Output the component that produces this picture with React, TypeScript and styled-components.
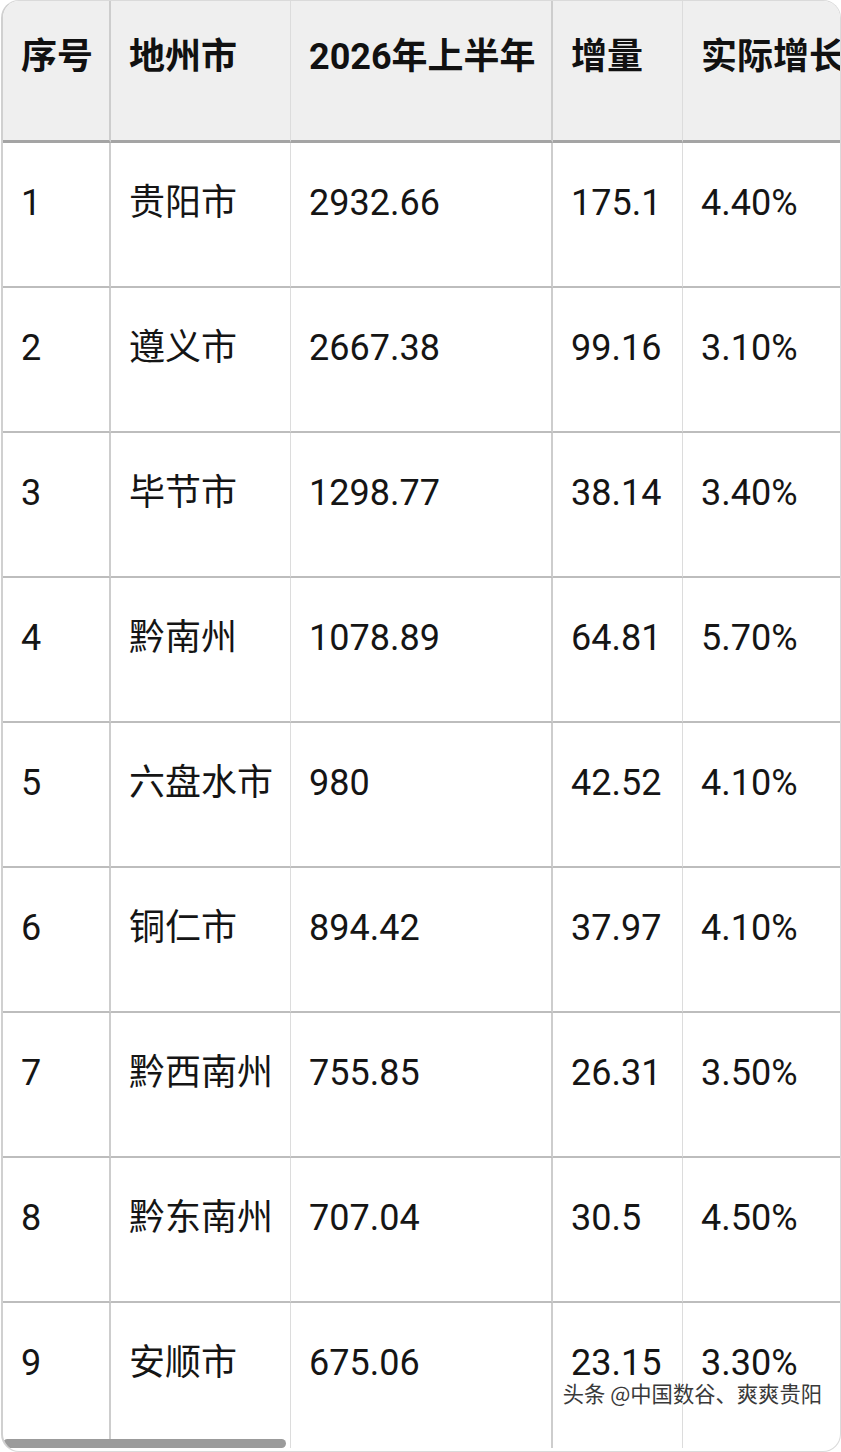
import React from 'react';
import styled, { createGlobalStyle } from 'styled-components';

const GlobalStyle = createGlobalStyle`
    html, body {
        margin: 0;
        padding: 0;
        background: #ffffff;
    }
    body {
        font-family: Roboto, "Noto Sans CJK SC", "Noto Sans", sans-serif;
        color: #111;
    }
`;

type Row = [string, string, string, string, string];

const rows: Row[] = [
    ['1', '贵阳市', '2932.66', '175.1', '4.40%'],
    ['2', '遵义市', '2667.38', '99.16', '3.10%'],
    ['3', '毕节市', '1298.77', '38.14', '3.40%'],
    ['4', '黔南州', '1078.89', '64.81', '5.70%'],
    ['5', '六盘水市', '980', '42.52', '4.10%'],
    ['6', '铜仁市', '894.42', '37.97', '4.10%'],
    ['7', '黔西南州', '755.85', '26.31', '3.50%'],
    ['8', '黔东南州', '707.04', '30.5', '4.50%'],
    ['9', '安顺市', '675.06', '23.15', '3.30%'],
];

const headers = ['序号', '地州市', '2026年上半年', '增量', '实际增长率'];
// widths incl. right border; every other column has the heavier rule
const widths = [108, 180, 262, 130, 280];

const Wrap = styled.div`
    position: relative;
    box-sizing: border-box;
    width: 840px;
    height: 1452px;
    margin-left: 1px;
    border: 1px solid #dadada;
    border-left: 2px solid #d0d0d0;
    border-radius: 18px;
    overflow: hidden;
`;

const Table = styled.table`
    table-layout: fixed;
    border-collapse: separate;
    border-spacing: 0;
    width: ${widths.reduce((a, b) => a + b, 0)}px;
`;

const Th = styled.th<{ $heavy: boolean }>`
    box-sizing: border-box;
    height: 142px;
    padding: 31px 0 0 18px;
    vertical-align: top;
    text-align: left;
    background: #efefef;
    font-size: 36px;
    font-weight: 700;
    line-height: 50px;
    white-space: nowrap;
    color: #111;
    border-bottom: 3px solid #a4a4a4;
    border-right: ${p => (p.$heavy ? '2px solid #cdcdcd' : '1px solid #dcdcdc')};
`;

const Td = styled.td<{ $heavy: boolean; $last: boolean }>`
    box-sizing: border-box;
    height: 145px;
    padding: 42px 0 0 18px;
    vertical-align: top;
    font-size: 36px;
    font-weight: 400;
    line-height: 36px;
    white-space: nowrap;
    color: #151515;
    border-bottom: ${p => (p.$last ? 'none' : '2px solid #bdbdbd')};
    border-right: ${p => (p.$heavy ? '2px solid #cdcdcd' : '1px solid #dcdcdc')};
`;

const ScrollThumb = styled.div`
    position: absolute;
    left: 0;
    bottom: 3px;
    width: 283px;
    height: 9px;
    border-radius: 5px;
    background: #9b9b9b;
`;

const Watermark = styled.div`
    position: absolute;
    right: 18px;
    bottom: 48px;
    font-family: "Noto Sans CJK SC", sans-serif;
    font-size: 21.3px;
    line-height: 21px;
    color: #3a3a3a;
    text-shadow: 0 0 2px #fff, 0 0 2px #fff, 1px 1px 0 #fff;
    white-space: nowrap;
`;

export default function App() {
    return <>
        <GlobalStyle />
        <Wrap>
            <Table>
                <colgroup>
                    {widths.map((w, i) => <col key={i} style={{ width: w }} />)}
                </colgroup>
                <thead>
                    <tr>
                        {headers.map((h, i) => <Th key={h} $heavy={i % 2 === 0}>{h}</Th>)}
                    </tr>
                </thead>
                <tbody>
                    {rows.map((r, ri) => <tr key={r[0]}>
                        {r.map((c, i) => <Td key={i} $heavy={i % 2 === 0} $last={ri === rows.length - 1}>{c}</Td>)}
                    </tr>)}
                </tbody>
            </Table>
            <Watermark>头条 @中国数谷、爽爽贵阳</Watermark>
            <ScrollThumb />
        </Wrap>
    </>
}
